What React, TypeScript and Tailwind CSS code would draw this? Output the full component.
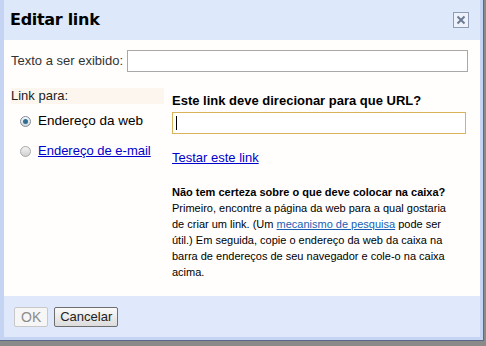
export default function App() {
  return (
    <div className="w-[486px] h-[346px] bg-[#8a8a8a] overflow-hidden relative font-['Liberation_Sans',sans-serif]">
      <div className="w-[484px] h-[341px] bg-[#c4d4f2] border-r border-b border-[#5a6987] pl-[4px] pr-[3px] pt-0 pb-[3px] flex flex-col">
        {/* Header */}
        <div className="h-[40px] bg-[#dde8fb] flex items-center justify-between pl-[6px] pr-[11px]">
          <h1 className="text-[16px] font-bold text-black font-['DejaVu_Sans',sans-serif] tracking-[-0.3px]">Editar link</h1>
          <div className="w-[16px] h-[16px] border border-[#8e9cb6] bg-[#edf2fc] flex items-center justify-center">
            <svg width="10" height="10" viewBox="0 0 10 10">
              <path d="M1.5 1.5 L8.5 8.5 M8.5 1.5 L1.5 8.5" stroke="#6d7a92" strokeWidth="2" />
            </svg>
          </div>
        </div>

        {/* Body */}
        <div className="h-[256px] bg-[#fffefd] px-[7px] pt-[10px] text-[13px] text-[#222]">
          <div className="flex items-center gap-[4px]">
            <span className="text-[13px] text-[#333]">Texto a ser exibido:</span>
            <div className="w-[341px] h-[22px] border border-[#a8a8a8] bg-white" />
          </div>

          <div className="flex mt-[16px]">
            <div className="w-[153px]">
              <div className="bg-[#fdf6ee] h-[16px] flex items-center">
                <span className="text-[13px] text-[#222]">Link para:</span>
              </div>
              <div className="flex items-center gap-[7px] mt-[7px] pl-[9px]">
                <span className="w-[11px] h-[11px] rounded-full border border-[#7f8a99] bg-gradient-to-b from-[#fafafa] to-[#d6d6d6] flex items-center justify-center">
                  <span className="w-[5px] h-[5px] rounded-full bg-[#2d6e96]" />
                </span>
                <span className="text-[13.5px] text-black">Endereço da web</span>
              </div>
              <div className="flex items-center gap-[7px] mt-[10px] pl-[9px]">
                <span className="w-[11px] h-[11px] rounded-full border border-[#a8a8a8] bg-gradient-to-b from-[#f4f4f4] to-[#d0d0d0]" />
                <a className="text-[13px] text-[#0000cc] underline">Endereço de e-mail</a>
              </div>
            </div>

            <div className="ml-[8px] pt-[5px] w-[295px]">
              <div className="text-[13px] font-bold text-black leading-[15px]">Este link deve direcionar para que URL?</div>
              <div className="mt-[4px] w-[294px] h-[22px] border border-[#d9b25a] bg-white flex items-center pl-[3px]">
                <span className="w-[1px] h-[14px] bg-black" />
              </div>
              <a className="block mt-[16px] text-[13px] leading-[15px] text-[#0000cc] underline">Testar este link</a>
              <div className="mt-[19px] text-[11px] leading-[16px] text-black whitespace-nowrap">
                <div className="font-bold">Não tem certeza sobre o que deve colocar na caixa?</div>
                <div>
                  Primeiro, encontre a página da web para a qual gostaria
                  <br />
                  de criar um link. (Um <a className="text-[#1a5fb4] underline">mecanismo de pesquisa</a> pode ser
                  <br />
                  útil.) Em seguida, copie o endereço da web da caixa na
                  <br />
                  barra de endereços de seu navegador e cole-o na caixa
                  <br />
                  acima.
                </div>
              </div>
            </div>
          </div>
        </div>

        {/* Footer */}
        <div className="flex-1 bg-[#dfe9fb] flex items-center gap-[6px] pl-[10px]">
          <button className="h-[20px] px-[6px] border border-[#c8c8c8] bg-[#f6f6f6] rounded-[2px] text-[14px] text-[#8c8c8c] leading-none">OK</button>
          <button className="h-[20px] px-[5px] border border-[#6e6e6e] bg-gradient-to-b from-[#fafafa] to-[#dcdcdc] rounded-[2px] text-[13px] text-[#222] leading-none">Cancelar</button>
        </div>
      </div>
    </div>
  );
}
